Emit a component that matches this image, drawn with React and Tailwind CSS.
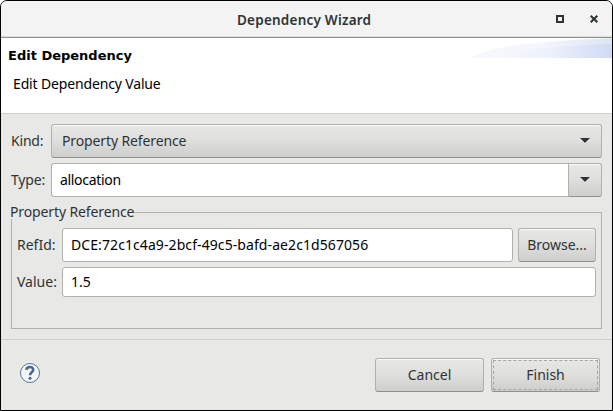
import React from "react";

const raised =
  "rounded-[3px] border border-[#b0b1ab] border-b-[#8f908b] bg-gradient-to-b from-[#e8e8e6] via-[#dededc] to-[#cececc] shadow-[inset_0_1px_0_#fafafa] text-[#2e3436]";
const field = "rounded-[3px] border border-[#b0b1ab] bg-white text-black";

function Label({ children, className = "" }) {
  return <span className={"shrink-0 whitespace-pre " + className}>{children}</span>;
}

function Arrow() {
  return (
    <svg width="10" height="6" viewBox="0 0 10 6" className="block shrink-0">
      <path d="M0 1h10L5 6z" fill="#fff" opacity=".6" />
      <path d="M0 0h10L5 5z" fill="#2e3436" />
    </svg>
  );
}

function TitleBar() {
  return (
    <header className="flex h-[37px] shrink-0 items-center border-b border-[#8f908e] bg-[#f3f3f3] shadow-[inset_0_-1px_0_#dedede] text-[#2e3436]">
      <div className="w-[236px]" />
      <Label className="pt-px text-[13.5px] font-semibold tracking-[0.22px]">Dependency Wizard</Label>
      <svg width="44" height="10" viewBox="0 0 44 10" className="ml-auto mr-[12px] block">
        <path d="M1 2h6v6H1z" fill="none" stroke="#2e3436" strokeWidth="2" />
        <path d="M34.7 1.7l6.6 6.6m0-6.6l-6.6 6.6" stroke="#2e3436" strokeWidth="2.1" />
      </svg>
    </header>
  );
}

function Swoosh() {
  return (
    <svg width="141" height="20" viewBox="0 0 141 20" className="block shrink-0">
      <defs>
        <linearGradient id="wave" x1="0" x2="1">
          <stop offset="0" stopColor="#f6f8fd" />
          <stop offset=".5" stopColor="#f3f6fc" />
          <stop offset="1" stopColor="#dde5f8" />
        </linearGradient>
        <linearGradient id="waveFront" x1="0" x2="1">
          <stop offset="0" stopColor="#f8fafd" />
          <stop offset=".5" stopColor="#edf1fa" />
          <stop offset="1" stopColor="#d0daf4" />
        </linearGradient>
      </defs>
      <path d="M0 20C15 9 65 3 141 0V20z" fill="url(#wave)" />
      <path d="M15 20C40 12 80 8 141 6V20z" fill="url(#waveFront)" />
    </svg>
  );
}

export default function App() {
  return (
    <div className="h-[411px] w-[613px] bg-white">
      <div className="flex h-full flex-col overflow-hidden rounded-t-[7px] border border-black bg-[#e8e8e6] font-['Noto_Sans','Open_Sans',sans-serif] text-[14px] leading-[18px] text-[#2e3436]">
        <TitleBar />
        <section className="flex h-[76px] shrink-0 justify-between border-b border-[#cfd0cb] bg-white text-black">
          <div className="pl-[7px] pt-[9px]">
            <div className="font-['DejaVu_Sans'] text-[13px] font-bold">Edit Dependency</div>
            <div className="pl-[5px] pt-[10px]">
              <Label className="tracking-[-0.15px]">Edit Dependency Value</Label>
            </div>
          </div>
          <Swoosh />
        </section>

        <main className="flex h-[226px] shrink-0 flex-col border-b border-[#cfd0cb] pl-[10px] pr-[10px] pt-[10px]">
          <div className="flex h-[34px] items-center">
            <Label className="w-[40px] tracking-[-0.2px]">Kind:</Label>
            <div className={"flex h-full flex-1 items-center justify-between pl-[10px] pr-[11px] " + raised}>
              <Label className="tracking-[-0.12px]">Property Reference</Label>
              <Arrow />
            </div>
          </div>
          <div className="mt-[5px] flex h-[34px] items-center">
            <Label className="w-[40px] tracking-[-0.15px]">Type:</Label>
            <div className={"flex h-full flex-1 items-center rounded-r-none border-r-0 pl-[8px] " + field}>
              <Label className="tracking-[-0.32px]">allocation</Label>
            </div>
            <div className={"flex h-full w-[34px] items-center justify-center rounded-l-none " + raised}>
              <Arrow />
            </div>
          </div>

          <div className="mt-[6px] flex h-[16px] shrink-0">
            <Label className="-ml-px leading-[18px] tracking-[-0.12px]">Property Reference</Label>
            <div className="mt-[9px] flex-1 border-r border-t border-[#b0b1ab]" />
          </div>
          <div className="flex h-[110px] flex-col border-x border-b border-[#b0b1ab] pl-[5px] pr-[5px] pt-[9px]">
            <div className="flex h-[34px] items-center">
              <Label className="w-[45px]">RefId:</Label>
              <div className={"flex h-full flex-1 items-center pl-[8px] " + field}>
                <Label className="tracking-[0.085px]">DCE:72c1c4a9-2bcf-49c5-bafd-ae2c1d567056</Label>
              </div>
              <button className={"ml-[5px] h-full w-[78px] " + raised}>
                <Label>Browse...</Label>
              </button>
            </div>
            <div className="mt-[5px] flex h-[30px] items-center">
              <Label className="w-[45px]">Value:</Label>
              <div className={"flex h-full flex-1 items-center pl-[8px] " + field}>
                <Label>1.5</Label>
              </div>
            </div>
          </div>
        </main>

        <footer className="flex flex-1 items-start pl-[18px] pr-[12px] pt-[18px]">
          <svg width="22" height="22" viewBox="0 0 22 22" className="mt-[4px] block">
            <circle cx="11" cy="11" r="9.5" fill="#f3f5f8" stroke="#5a7196" />
            <path d="M7.4 7.9C7.8 4 14.4 4.2 14.2 7.8C14.1 10.3 11 10.3 11 13.2" fill="none" stroke="#4c6690" strokeWidth="2.6" />
            <circle cx="11" cy="16.2" r="1.5" fill="#4c6690" />
          </svg>
          <button className={"ml-auto h-[34px] w-[109px] " + raised}>
            <Label>Cancel</Label>
          </button>
          <button className={"ml-[7px] h-[34px] w-[109px] p-px " + raised}>
            <span className="flex h-full items-center justify-center border border-dashed border-[#a5a6a3]">
              <Label>Finish</Label>
            </span>
          </button>
        </footer>
      </div>
    </div>
  );
}
